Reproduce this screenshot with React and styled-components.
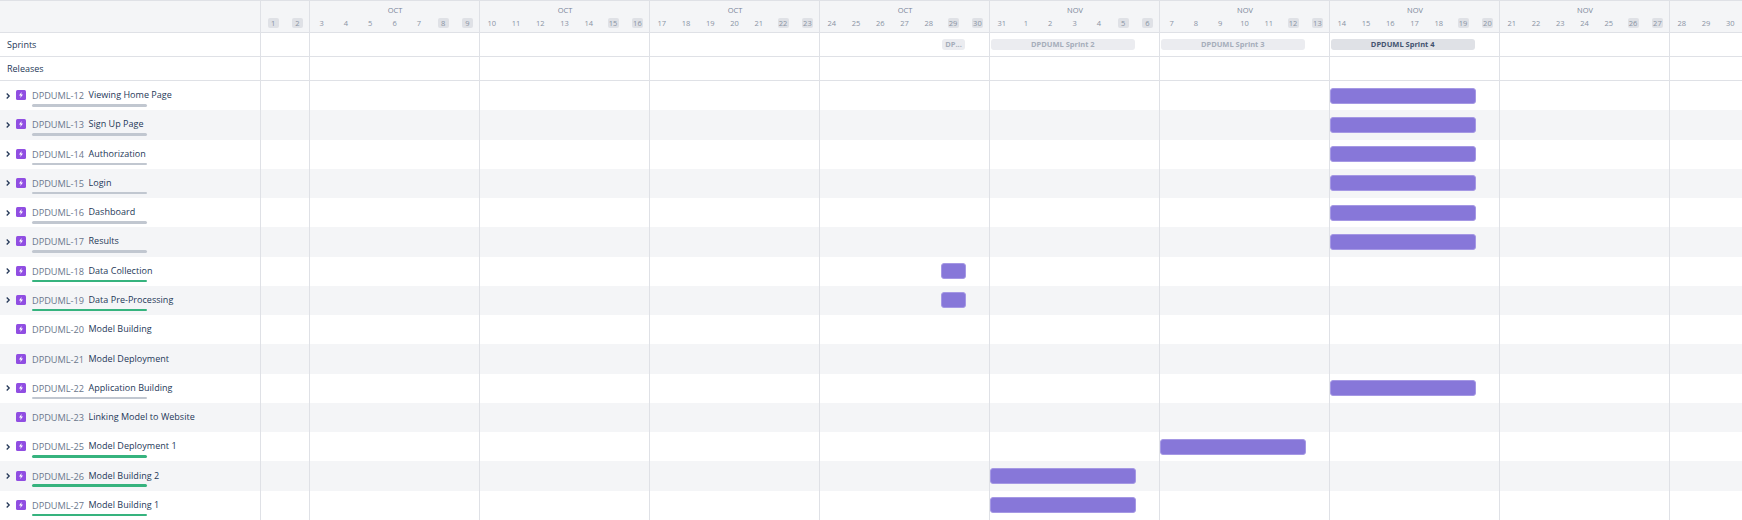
import React from 'react';
import styled, { createGlobalStyle } from 'styled-components';

const weeks = [
  { days: [1, 2], off: [1, 2] },
  { month: 'OCT', days: [3, 4, 5, 6, 7, 8, 9], off: [8, 9] },
  { month: 'OCT', days: [10, 11, 12, 13, 14, 15, 16], off: [15, 16] },
  { month: 'OCT', days: [17, 18, 19, 20, 21, 22, 23], off: [22, 23] },
  { month: 'OCT', days: [24, 25, 26, 27, 28, 29, 30], off: [29, 30] },
  { month: 'NOV', days: [31, 1, 2, 3, 4, 5, 6], off: [5, 6] },
  { month: 'NOV', days: [7, 8, 9, 10, 11, 12, 13], off: [12, 13] },
  { month: 'NOV', days: [14, 15, 16, 17, 18, 19, 20], off: [19, 20] },
  { month: 'NOV', days: [21, 22, 23, 24, 25, 26, 27], off: [26, 27] },
  { days: [28, 29, 30], off: [] },
];

const sprints = [
  { name: 'DPDUML Sprint 1', start: 29, span: 1 },
  { name: 'DPDUML Sprint 2', start: 31, span: 6 },
  { name: 'DPDUML Sprint 3', start: 38, span: 6 },
  { name: 'DPDUML Sprint 4', start: 45, span: 6, active: true },
];

const issues = [
  { id: 'DPDUML-12', title: 'Viewing Home Page', progress: 'todo', start: 45 },
  { id: 'DPDUML-13', title: 'Sign Up Page', progress: 'todo', start: 45 },
  { id: 'DPDUML-14', title: 'Authorization', progress: 'todo', start: 45 },
  { id: 'DPDUML-15', title: 'Login', progress: 'todo', start: 45 },
  { id: 'DPDUML-16', title: 'Dashboard', progress: 'todo', start: 45 },
  { id: 'DPDUML-17', title: 'Results', progress: 'todo', start: 45 },
  { id: 'DPDUML-18', title: 'Data Collection', progress: 'done', start: 29, span: 1 },
  { id: 'DPDUML-19', title: 'Data Pre-Processing', progress: 'done', start: 29, span: 1 },
  { id: 'DPDUML-20', title: 'Model Building' },
  { id: 'DPDUML-21', title: 'Model Deployment' },
  { id: 'DPDUML-22', title: 'Application Building', progress: 'todo', start: 45 },
  { id: 'DPDUML-23', title: 'Linking Model to Website' },
  { id: 'DPDUML-25', title: 'Model Deployment 1', progress: 'done', start: 38 },
  { id: 'DPDUML-26', title: 'Model Building 2', progress: 'done', start: 31 },
  { id: 'DPDUML-27', title: 'Model Building 1', progress: 'done', start: 31 },
];

const DAY = 170 / 7;
const LINE = '#dfe1e6';

const Global = createGlobalStyle`
  html, body {
    margin: 0;
    background: #fff;
    overflow: hidden;
  }
  * { box-sizing: border-box; }
`;

const Page = styled.div`
  width: 1742px;
  height: 520px;
  overflow: hidden;
  font-family: "Open Sans", "Liberation Sans", sans-serif;
  color: #253858;
`;

const Header = styled.div`
  display: flex;
  height: 33px;
  background: #f4f5f7;
  border-top: 1px solid ${LINE};
  border-bottom: 1px solid ${LINE};
`;

const Corner = styled.div`
  flex: 0 0 261px;
  border-right: 1px solid ${LINE};
`;

const Week = styled.div`
  flex: 0 0 ${({ $count }) => $count * DAY}px;
  display: flex;
  flex-direction: column;
  justify-content: flex-end;
  border-right: ${({ $last }) => ($last ? 'none' : `1px solid ${LINE}`)};
`;

const Month = styled.div`
  height: 12px;
  margin-bottom: 2px;
  padding-left: 2px;
  text-align: center;
  font-size: 7.5px;
  line-height: 12px;
  color: #7a869a;
`;

const Days = styled.div`
  display: flex;
  height: 14px;
  margin-right: -1px;
`;

const Day = styled.div`
  flex: 0 0 ${DAY}px;
  display: flex;
  justify-content: center;
  align-items: flex-start;
`;

const DayNum = styled.span`
  width: 11px;
  height: 10px;
  border-radius: 2px;
  background: ${({ $off }) => ($off ? LINE : 'transparent')};
  font-size: 7.5px;
  line-height: 10px;
  color: #8993a4;
  white-space: nowrap;
  display: flex;
  justify-content: center;
`;

const Row = styled.div`
  display: flex;
  height: ${({ $h }) => $h};
  background: ${({ $alt }) => ($alt ? '#f4f5f7' : '#fff')};
  border-bottom: ${({ $ruled }) => ($ruled ? `1px solid ${LINE}` : 'none')};
`;

const Side = styled.div`
  flex: 0 0 261px;
  border-right: 1px solid ${LINE};
  position: relative;
  overflow: hidden;
`;

const PlainLabel = styled.div`
  height: 100%;
  padding: 0 0 1px 7px;
  display: flex;
  align-items: center;
  font-size: 9px;
  color: #253858;
`;

const IssueLine = styled.div`
  height: 100%;
  display: flex;
  align-items: center;
`;

const ChevronSlot = styled.span`
  flex: 0 0 16px;
  display: flex;
  justify-content: center;
`;

const IssueIcon = styled.svg`
  flex: 0 0 10px;
  width: 10px;
  height: 10px;
  margin: 0 6px 1px 0;
`;

const IssueId = styled.span`
  flex: 0 0 56.5px;
  font-size: 9.2px;
  color: #6b778c;
`;

const IssueTitle = styled.span`
  font-size: 9px;
  letter-spacing: 0.03px;
  color: #253858;
  margin-bottom: 2px;
`;

const Progress = styled.div`
  position: absolute;
  left: 32px;
  top: 23px;
  width: 115px;
  height: 2.5px;
  border-radius: 2px;
  background: ${({ $state }) => ($state === 'done' ? '#36b37e' : '#c1c7d0')};
`;

const Track = styled.div`
  flex: 1;
  display: grid;
  grid-template-columns: repeat(61, ${DAY}px);
  align-items: center;
  background-image: linear-gradient(to right, ${LINE} 1px, transparent 1px);
  background-size: 170px 100%;
  background-position: 48px 0;
`;

const SprintBar = styled.div`
  grid-column: ${({ $start, $span }) => `${$start} / span ${$span}`};
  grid-row: 1;
  height: 11px;
  margin: 0 0.5px 0 1.5px;
  border-radius: 3px;
  background: ${({ $active }) => ($active ? LINE : '#ebecf0')};
  color: ${({ $active }) => ($active ? '#42526e' : '#a5adba')};
  font-size: 7.5px;
  font-weight: 700;
  line-height: 11px;
  text-align: center;
  padding: 0 2px;
  overflow: hidden;
  white-space: nowrap;
  text-overflow: ellipsis;
`;

const TaskBar = styled.div`
  grid-column: ${({ $start, $span }) => `${$start} / span ${$span}`};
  grid-row: 1;
  height: 16px;
  margin: 0 -0.5px 0 0.5px;
  border-radius: 3px;
  background: #8777d9;
  border: 1px solid #a598e4;
`;

const Chevron = () => (
  <svg width="6" height="8" viewBox="0 0 6 8">
    <path d="M1.7 1.5 L4.2 4 L1.7 6.5" fill="none" stroke="#253858" strokeWidth="1.3" />
  </svg>
);

const Epic = () => (
  <IssueIcon viewBox="0 0 10 10">
    <rect width="10" height="10" rx="1.5" fill="#904ee2" />
    <path d="M5.6 2 L3 5.6 H4.8 L4.3 8 L7 4.4 H5.2 Z" fill="#fff" />
  </IssueIcon>
);

export default function App() {
  return (
    <Page>
      <Global />
      <Header>
        <Corner />
        {weeks.map((week, i) => (
          <Week key={i} $count={week.days.length} $last={i === weeks.length - 1}>
            {week.month && <Month>{week.month}</Month>}
            <Days>
              {week.days.map((d) => (
                <Day key={d}>
                  <DayNum $off={week.off.includes(d)}>{d}</DayNum>
                </Day>
              ))}
            </Days>
          </Week>
        ))}
      </Header>

      <Row $h="24px" $ruled>
        <Side><PlainLabel>Sprints</PlainLabel></Side>
        <Track>
          {sprints.map((s) => (
            <SprintBar key={s.name} $start={s.start} $span={s.span} $active={s.active}>
              {s.span === 1 ? 'DP...' : s.name}
            </SprintBar>
          ))}
        </Track>
      </Row>

      <Row $h="24px" $ruled>
        <Side><PlainLabel>Releases</PlainLabel></Side>
        <Track />
      </Row>

      {issues.map((issue, i) => (
        <Row key={issue.id} $h="29.27px" $alt={i % 2 === 1}>
          <Side>
            <IssueLine>
              <ChevronSlot>{issue.progress && <Chevron />}</ChevronSlot>
              <Epic />
              <IssueId>{issue.id}</IssueId>
              <IssueTitle>{issue.title}</IssueTitle>
            </IssueLine>
            {issue.progress && <Progress $state={issue.progress} />}
          </Side>
          <Track>
            {issue.start && <TaskBar $start={issue.start} $span={issue.span || 6} />}
          </Track>
        </Row>
      ))}
    </Page>
  );
}
